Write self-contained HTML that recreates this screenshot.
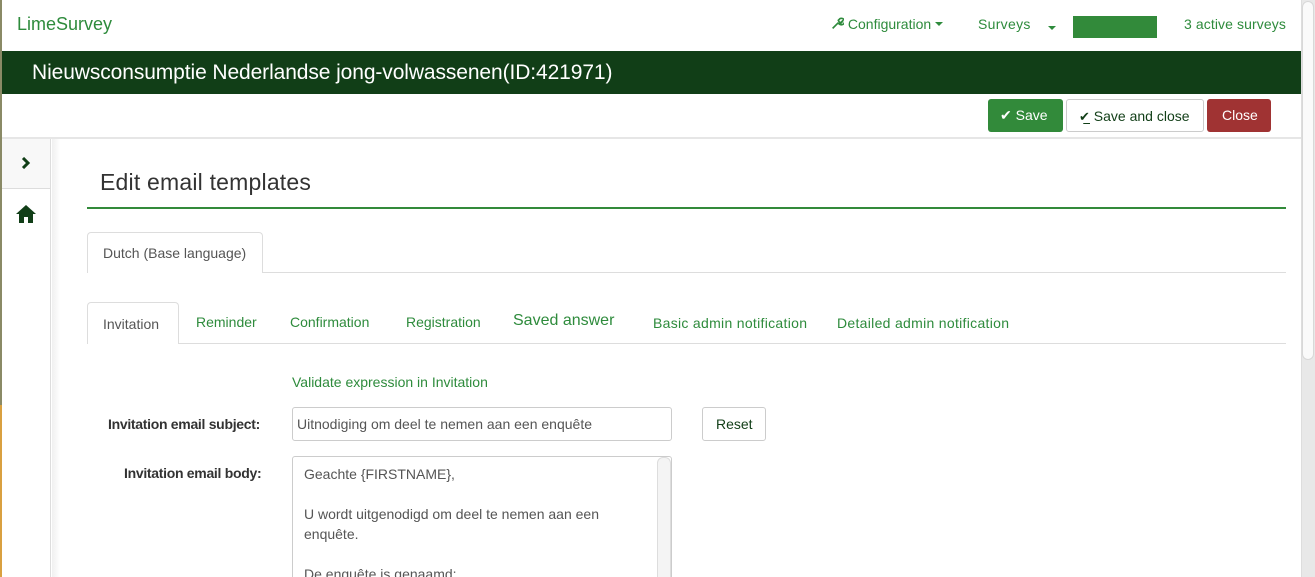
<!DOCTYPE html>
<html><head><meta charset="utf-8"><style>
*{box-sizing:border-box;margin:0;padding:0}
html,body{width:1315px;height:577px;overflow:hidden}
body{position:relative;background:#fff;font-family:"Liberation Sans",sans-serif;font-size:14px;color:#333}
.a{position:absolute;white-space:nowrap}
.g{color:#2e8b3c}
.tab{position:absolute;font-size:14px;color:#2e8b3c;letter-spacing:0}
.car{display:inline-block;width:0;height:0;border-left:4px solid transparent;border-right:4px solid transparent;border-top:4px solid #2e8b3c;vertical-align:3px}
</style></head><body>
<div class="a" style="left:0;top:0;width:2px;height:577px;background:linear-gradient(#8a8a66 0,#8a8a66 405px,#d9a040 405px)"></div>
<div class="a g" style="left:17px;top:14px;font-size:18px;letter-spacing:0">LimeSurvey</div>
<div class="a g" style="left:831px;top:16px;font-size:14px"><svg width="13" height="13" viewBox="0 0 16 16" style="vertical-align:-1px"><path d="M2 14 L9 7 M9 7 a4 4 0 1 0 2-5 l-2 2 1 2 2 1 2-2 a4 4 0 0 1-5 3" stroke="#2e8b3c" stroke-width="2" fill="none"/></svg> Configuration <span class="car"></span></div>
<div class="a g" style="left:978px;top:16px;letter-spacing:0.3px">Surveys</div>
<div class="a" style="left:1048px;top:20px"><span class="car"></span></div>
<div class="a" style="left:1073px;top:16px;width:84px;height:22px;background:#328a3a"></div>
<div class="a g" style="left:1184px;top:16px;letter-spacing:0.1px">3 active surveys</div>
<div class="a" style="left:2px;top:51px;width:1299px;height:43px;background:#113e17"></div>
<div class="a" style="left:32px;top:61px;font-size:21px;color:#fff;letter-spacing:-0.1px">Nieuwsconsumptie Nederlandse jong-volwassenen(ID:421971)</div>
<div class="a" style="left:2px;top:137px;width:1299px;height:2px;background:#e6e6e6"></div>
<div class="a" style="left:988px;top:99px;width:75px;height:33px;background:#328a3a;border-radius:3px;color:#fff;padding:8px 0 0 12px;font-size:14px"><span style="font-size:14px">✔</span> Save</div>
<div class="a" style="left:1066px;top:99px;width:138px;height:33px;border:1px solid #ccc;border-radius:3px;color:#113e17;padding:8px 0 0 12px;font-size:14px"><span style="font-size:13px">✔̲</span> Save and close</div>
<div class="a" style="left:1207px;top:99px;width:64px;height:33px;background:#a03333;border-radius:3px;color:#fff;padding:8px 0 0 15px;font-size:14px">Close</div>
<div class="a" style="left:2px;top:139px;width:49px;height:438px;background:#fff;border-right:1px solid #ddd"></div>
<div class="a" style="left:2px;top:139px;width:49px;height:50px;background:#f8f8f8;border-bottom:1px solid #ddd;border-right:1px solid #ddd"></div>
<svg class="a" style="left:21px;top:157px" width="10" height="12" viewBox="0 0 10 12"><path d="M2 1 L7 6 L2 11" stroke="#113e17" stroke-width="3" fill="none"/></svg>
<svg class="a" style="left:16px;top:205px" width="20" height="18" viewBox="0 0 20 18"><path d="M10 0 L20 9 L17 9 L17 18 L12 18 L12 12 L8 12 L8 18 L3 18 L3 9 L0 9Z" fill="#113e17"/></svg>
<div class="a" style="left:52px;top:139px;width:8px;height:438px;background:linear-gradient(90deg,#f0f0f0,#fff)"></div>
<div class="a" style="left:100px;top:169px;font-size:23px;color:#333;letter-spacing:0.2px">Edit email templates</div>
<div class="a" style="left:87px;top:207px;width:1199px;height:2px;background:#328a3a"></div>
<div class="a" style="left:87px;top:272px;width:1199px;height:1px;background:#ddd"></div>
<div class="a" style="left:87px;top:232px;width:176px;height:41px;border:1px solid #ddd;border-bottom:none;border-radius:4px 4px 0 0;background:#fff;padding:12px 0 0 15px;color:#555">Dutch (Base language)</div>
<div class="a" style="left:87px;top:343px;width:1199px;height:1px;background:#ddd"></div>
<div class="a" style="left:87px;top:302px;width:92px;height:42px;border:1px solid #ddd;border-bottom:none;border-radius:4px 4px 0 0;background:#fff;padding:13px 0 0 15px;color:#555">Invitation</div>
<div class="tab" style="left:196px;top:314px">Reminder</div>
<div class="tab" style="left:290px;top:314px">Confirmation</div>
<div class="tab" style="left:406px;top:314px">Registration</div>
<div class="tab" style="left:513px;top:312px;font-size:16px">Saved answer</div>
<div class="tab" style="left:653px;top:315px;letter-spacing:0.3px">Basic admin notification</div>
<div class="tab" style="left:837px;top:315px;letter-spacing:0.3px">Detailed admin notification</div>
<div class="a g" style="left:292px;top:374px">Validate expression in Invitation</div>
<div class="a" style="left:108px;top:416px;font-weight:bold;color:#333;font-size:14px;letter-spacing:-0.3px">Invitation email subject:</div>
<div class="a" style="left:292px;top:407px;width:380px;height:34px;border:1px solid #ccc;border-radius:3px;padding:8px 0 0 4px;color:#555">Uitnodiging om deel te nemen aan een enquête</div>
<div class="a" style="left:702px;top:407px;width:64px;height:34px;border:1px solid #ccc;border-radius:3px;padding:8px 0 0 13px;color:#113e17">Reset</div>
<div class="a" style="left:124px;top:465px;font-weight:bold;color:#333;letter-spacing:-0.3px">Invitation email body:</div>
<div class="a" style="left:292px;top:456px;width:380px;height:130px;border:1px solid #ccc;border-radius:3px"></div>
<div class="a" style="left:657px;top:457px;width:14px;height:130px;background:#f4f4f4;border:1px solid #ddd;border-radius:6px 6px 0 0"></div>
<div class="a" style="left:304px;top:464px;color:#555;line-height:20px;white-space:normal;width:320px">Geachte {FIRSTNAME},<br><br>U wordt uitgenodigd om deel te nemen aan een<br>enquête.<br><br>De enquête is genaamd:</div>
<div class="a" style="left:1301px;top:0;width:14px;height:577px;background:#e8e8e8;border-left:1px solid #ddd"></div>
<div class="a" style="left:1302px;top:1px;width:12px;height:359px;background:#fafafa;border:1px solid #d8d8d8;border-radius:6px"></div>
</body></html>
